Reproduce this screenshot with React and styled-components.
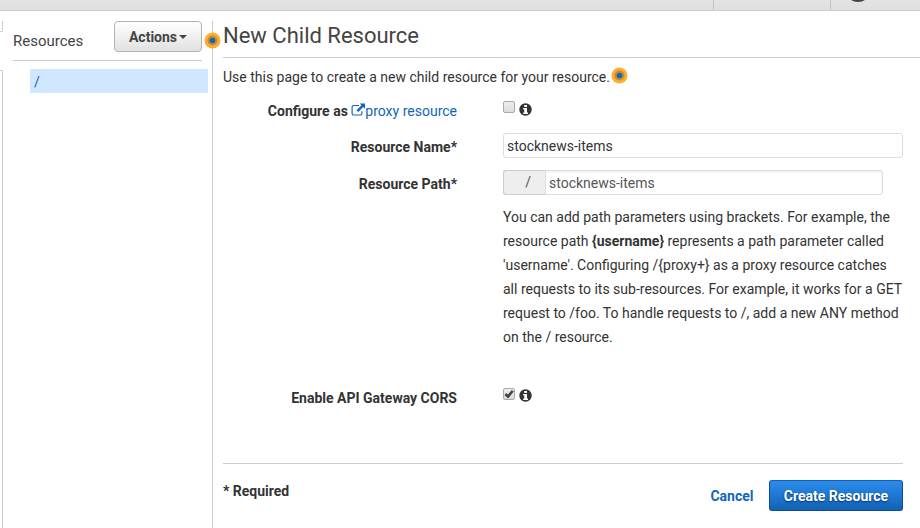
import React from "react";
import styled, { createGlobalStyle } from "styled-components";

const GlobalStyle = createGlobalStyle`
  *, *::before, *::after { box-sizing: border-box; }
  body {
    margin: 0;
    background: #fff;
    color: #333;
    font: 14px/24px Roboto, "Liberation Sans", sans-serif;
    overflow: hidden;
  }
`;

const Page = styled.div`
  display: flex;
  flex-direction: column;
  width: 920px;
  height: 528px;
  overflow: hidden;
`;

const TopBar = styled.header`
  display: flex;
  justify-content: flex-end;
  flex: none;
  height: 11px;
  background: linear-gradient(#e3e3e3, #dfdfdf);
  border-bottom: 1px solid #ccc;
`;

const TopBarItem = styled.div`
  width: ${(p) => p.$width}px;
  border-left: 1px solid #c4c4c4;
`;

const TopBarIcon = styled.svg`
  display: block;
  margin-left: 19px;
`;

const Body = styled.div`
  display: flex;
  flex: 1;
  padding-top: 10px;
`;

const Edge = styled.div`
  display: flex;
  flex-direction: column;
  justify-content: space-between;
  width: 3px;
`;

const EdgeTop = styled.div`
  height: 11px;
  border: solid #ccc;
  border-width: 0 1px 1px 0;
  border-bottom-right-radius: 2px;
`;

const EdgeBottom = styled.div`
  height: 458px;
  border: solid #ccc;
  border-width: 1px 1px 0 0;
  border-top-right-radius: 2px;
`;

const Sidebar = styled.aside`
  width: 209px;
  padding-left: 10px;
`;

const SidebarHeader = styled.div`
  display: flex;
  justify-content: space-between;
  width: 189px;
  height: 40px;
  border-bottom: 1px solid #ccc;
`;

const SidebarTitle = styled.h2`
  margin: 8px 0 0;
  font-size: 15px;
  font-weight: 400;
  color: #444;
`;

const ActionsButton = styled.button`
  display: flex;
  align-items: center;
  justify-content: center;
  gap: 2px;
  width: 88px;
  height: 31px;
  padding: 0;
  border: 1px solid #b3b3b3;
  border-radius: 4px;
  background: linear-gradient(#fff, #e1e1e1);
  color: #444;
  font: 700 14px Roboto, sans-serif;
`;

const Caret = styled.span`
  margin-top: 1px;
  border: solid transparent;
  border-width: 4px 4px 0;
  border-top-color: #444;
`;

const TreeItem = styled.div`
  width: 178px;
  height: 24px;
  margin: 8px 0 0 17px;
  padding-left: 4px;
  line-height: 26px;
  background: #cfe7ff;
  color: #1166bb;
`;

const Main = styled.main`
  position: relative;
  flex: 1;
  padding-left: 10px;
  border-left: 1px solid #ccc;
`;

const Title = styled.h1`
  height: 37px;
  margin: 0;
  border-bottom: 1px solid #ccc;
  font-size: 22px;
  font-weight: 400;
  line-height: 29px;
  color: #444;
`;

const Intro = styled.p`
  display: flex;
  gap: 1.5px;
  height: 35px;
  margin: 0;
  padding-top: 7px;
`;

const BeaconIcon = styled.svg`
  flex: none;
  width: 17px;
  height: 17px;
  margin-top: 2px;
`;

const DividerBeacon = styled.span`
  position: absolute;
  top: 9px;
  left: -9px;
  line-height: 0;
`;

const Row = styled.div`
  display: grid;
  grid-template-columns: 234px 400px;
  column-gap: 46px;
  height: ${(p) => p.$height}px;
`;

const Label = styled.label`
  padding-top: ${(p) => p.$top || 0}px;
  font-weight: 700;
  text-align: right;
`;

const Link = styled.a`
  color: #1166bb;
  font-weight: ${(p) => (p.$bold ? 700 : 400)};
`;

const LinkIcon = styled.svg`
  width: 14px;
  height: 14px;
  vertical-align: -1px;
`;

const Checks = styled.div`
  display: flex;
  gap: 4px;
  padding-top: ${(p) => p.$top || 0}px;
`;

const CheckBox = styled.span`
  width: 12px;
  height: 12px;
  border: 1px solid #a9a9a9;
  border-radius: 2px;
  background: linear-gradient(#eee, #dcdcdc);

  svg { display: block; overflow: visible; }
`;

const InfoIcon = styled.svg`
  width: 13px;
  height: 13px;
  margin-top: ${(p) => p.$top}px;
`;

const Field = styled.div`
  display: flex;
  width: ${(p) => p.$width}px;
  height: 25px;
  border: 1px solid #ddd;
  border-radius: 3px;
  box-shadow: ${(p) => (p.$inset ? "inset 0 1px 2px #eee" : "none")};
`;

const Input = styled.input`
  flex: 1;
  min-width: 0;
  padding: 0 4px 0 3px;
  border: 0;
  outline: 0;
  background: transparent;
  color: ${(p) => (p.$muted ? "#555" : "#333")};
  font: 14px Roboto, sans-serif;
`;

const Prefix = styled.span`
  width: 43px;
  margin: -1px 0 -1px -1px;
  padding-right: 14px;
  border: 1px solid #ccc;
  border-right-color: #ddd;
  border-radius: 3px 0 0 3px;
  background: #eee;
  color: #555;
  line-height: 23px;
  text-align: right;
`;

const Help = styled.p`
  margin: 0;
  white-space: nowrap;
  grid-column: 2;
`;

const Footer = styled.footer`
  display: flex;
  justify-content: space-between;
  width: 680px;
  padding-top: 16px;
  border-top: 1px solid #ccc;
`;

const Required = styled.strong`
  height: 24px;
  margin-top: -1px;
`;

const FooterActions = styled.div`
  display: flex;
  align-items: center;
  gap: 15.5px;
  height: 31px;
`;

const CreateButton = styled.button`
  width: 134px;
  height: 31px;
  padding: 0;
  border: 1px solid #0d4f94;
  border-top-color: #1462b5;
  border-radius: 3px;
  background: linear-gradient(#2b8cec, #1262b5);
  color: #fff;
  font: 700 14px Roboto, sans-serif;
  text-shadow: 0 1px 2px #063462;
`;

const Beacon = () => (
  <BeaconIcon viewBox="0 0 17 17">
    <circle cx="8.5" cy="8.5" r="8" fill="#ffad33" />
    <circle cx="8.5" cy="8.5" r="5" fill="#c58c2c" />
    <circle cx="8.5" cy="8.5" r="2.8" fill="#1166bb" />
  </BeaconIcon>
);

const ExternalLink = () => (
  <LinkIcon viewBox="0 0 14 14">
    <path d="M8 2.5H2.7Q1.1 2.5 1.1 4.1V10.4Q1.1 12 2.7 12H9.3Q10.9 12 10.9 10.4V8.3" fill="none" stroke="#1166bb" strokeWidth="1.15" />
    <path d="M8.6 0.4H14V5.8L12.2 4 7.2 9 5.5 7.3 10.5 2.3Z" fill="#1166bb" />
  </LinkIcon>
);

const Info = ({ top = 1.5 }) => (
  <InfoIcon $top={top} viewBox="0 0 13 13">
    <circle cx="6.5" cy="6.5" r="6.2" fill="#333" />
    <path d="M5.2 2H8V4H5.2ZM4.2 5H8V9.5H9V11H4.2V9.5H5.3V6.5H4.2Z" fill="#fff" />
  </InfoIcon>
);

const Check = () => (
  <svg width="10" height="10" viewBox="0 0 10 10">
    <path d="M1.4 5L4 7.6 8.8 1.7" fill="none" stroke="#444" strokeWidth="2.6" />
  </svg>
);

export default function App() {
  return (
    <>
      <GlobalStyle />
      <Page>
        <TopBar>
          <TopBarItem $width={117} />
          <TopBarItem $width={90}>
            <TopBarIcon width="16" height="3" viewBox="0 0 16 3">
              <path d="M1 0H15Q12 2 8 2T1 0Z" fill="#444" />
            </TopBarIcon>
          </TopBarItem>
        </TopBar>
        <Body>
          <Edge>
            <EdgeTop />
            <EdgeBottom />
          </Edge>
          <Sidebar>
            <SidebarHeader>
              <SidebarTitle>Resources</SidebarTitle>
              <ActionsButton>Actions<Caret /></ActionsButton>
            </SidebarHeader>
            <TreeItem>/</TreeItem>
          </Sidebar>
          <Main>
            <DividerBeacon><Beacon /></DividerBeacon>
            <Title>New Child Resource</Title>
            <Intro>Use this page to create a new child resource for your resource.<Beacon /></Intro>
            <Row $height={40}>
              <Label $top={6}>Configure as <Link><ExternalLink />proxy resource</Link></Label>
              <Checks $top={8}><CheckBox /><Info /></Checks>
            </Row>
            <Row $height={37}>
              <Label $top={2}>Resource Name*</Label>
              <Field $width={400}><Input defaultValue="stocknews-items" /></Field>
            </Row>
            <Row $height={35}>
              <Label $top={2}>Resource Path*</Label>
              <Field $width={380} $inset><Prefix>/</Prefix><Input $muted defaultValue="stocknews-items" /></Field>
            </Row>
            <Row $height={181}>
              <Help>
                You can add path parameters using brackets. For example, the<br />
                resource path <b>{"{username}"}</b> represents a path parameter called<br />
                'username'. Configuring /{"{proxy+}"} as a proxy resource catches<br />
                all requests to its sub-resources. For example, it works for a GET<br />
                request to /foo. To handle requests to /, add a new ANY method<br />
                on the / resource.
              </Help>
            </Row>
            <Row $height={77}>
              <Label>Enable API Gateway CORS</Label>
              <Checks $top={2}><CheckBox><Check /></CheckBox><Info top={1} /></Checks>
            </Row>
            <Footer>
              <Required>* Required</Required>
              <FooterActions>
                <Link $bold>Cancel</Link>
                <CreateButton>Create Resource</CreateButton>
              </FooterActions>
            </Footer>
          </Main>
        </Body>
      </Page>
    </>
  );
}
